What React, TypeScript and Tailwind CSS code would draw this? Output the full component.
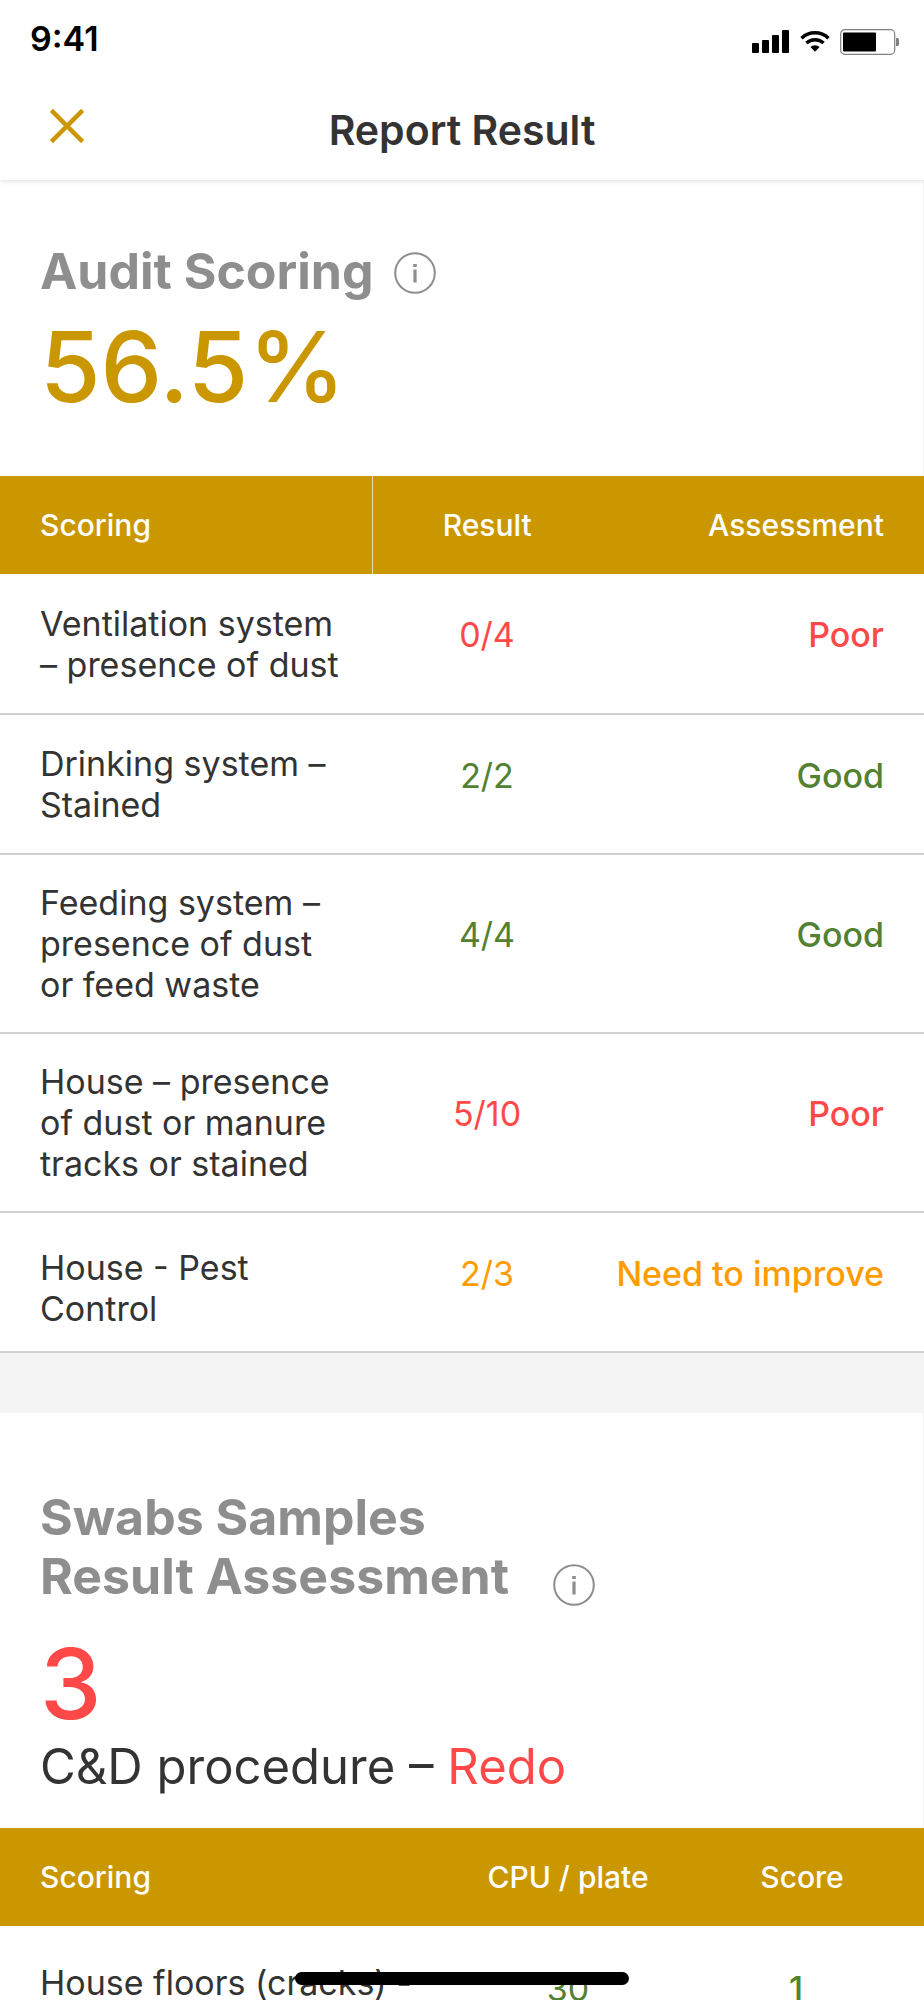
import clsx from "clsx";

type Level = "poor" | "good" | "improve";

interface AuditRow {
  label: string;
  result: string;
  level: Level;
}

const auditRows: AuditRow[] = [
  { label: "Ventilation system\n– presence of dust", result: "0/4", level: "poor" },
  { label: "Drinking system –\nStained", result: "2/2", level: "good" },
  {
    label: "Feeding system –\npresence of dust\nor feed waste",
    result: "4/4",
    level: "good",
  },
  {
    label: "House – presence\nof dust or manure\ntracks or stained",
    result: "5/10",
    level: "poor",
  },
  { label: "House - Pest\nControl", result: "2/3", level: "improve" },
];

const swabRows = [{ label: "House floors (cracks) -", count: "30", score: "1" }];

const levelText: Record<Level, string> = {
  poor: "Poor",
  good: "Good",
  improve: "Need to improve",
};

const levelColor: Record<Level, string> = {
  poor: "text-[#ff4848]",
  good: "text-[#538132]",
  improve: "text-[#ff9c00]",
};

function StatusBar() {
  return (
    <div className="flex h-20 items-center justify-between pl-[30px] pr-6 text-black">
      <span className="pb-[2px] text-[34px] leading-[40px] font-semibold">9:41</span>
      <div className="flex items-center gap-[10px] pt-[3px]">
        <svg width="38" height="24" viewBox="0 0 38 24" fill="currentColor" aria-hidden="true">
          <rect x="0" y="13" width="7" height="10" rx="1" />
          <rect x="10" y="10" width="7" height="13" rx="1" />
          <rect x="20" y="5" width="7" height="18" rx="1" />
          <rect x="30" y="0" width="7" height="23" rx="1" />
        </svg>
        <svg width="30" height="22" viewBox="0 0 30 22" fill="none" aria-hidden="true">
          <path d="M1.5 7.2a19.5 19.5 0 0 1 27 0" stroke="currentColor" strokeWidth="3.4" />
          <path d="M6.4 12.1a12.6 12.6 0 0 1 17.2 0" stroke="currentColor" strokeWidth="3.4" />
          <path d="M10.4 16.1a6.8 6.8 0 0 1 9.2 0L15 20.8z" fill="currentColor" />
        </svg>
        <svg width="60" height="26" viewBox="0 0 60 26" fill="none" aria-hidden="true">
          <rect x="0.7" y="0.7" width="54" height="24.6" rx="4" stroke="#808080" strokeWidth="1.2" />
          <rect x="3" y="3.5" width="33" height="19" rx="1" fill="currentColor" />
          <path d="M56 9h1.5a1.5 1.5 0 0 1 1.5 1.5v5a1.5 1.5 0 0 1-1.5 1.5H56z" fill="#808080" />
        </svg>
      </div>
    </div>
  );
}

function InfoButton({ label }: { label: string }) {
  return (
    <button type="button" aria-label={label} className="shrink-0 pt-1 text-[#8e8e8e]">
      <svg width="42" height="42" viewBox="0 0 42 42" fill="none" aria-hidden="true">
        <circle cx="21" cy="21" r="19.8" stroke="currentColor" strokeWidth="2" />
        <rect x="19.2" y="12" width="3.6" height="3" fill="currentColor" />
        <rect x="19.4" y="17.5" width="3.2" height="13" fill="currentColor" />
      </svg>
    </button>
  );
}

function Header() {
  return (
    <header className="relative z-10 bg-white shadow-[0_1px_5px_rgba(0,0,0,0.14)]">
      <StatusBar />
      <div className="grid h-[100px] grid-cols-[1fr_auto_1fr] items-center px-[49px]">
        <button type="button" aria-label="Close" className="justify-self-start pb-2">
          <svg width="36" height="36" viewBox="0 0 36 36" fill="none" aria-hidden="true">
            <path d="M2.4 2.4l31.2 31.2M33.6 2.4L2.4 33.6" stroke="#cb9700" strokeWidth="4.4" />
          </svg>
        </button>
        <h1 className="text-[41px] leading-[48px] font-semibold text-[#333333]">
          Report Result
        </h1>
      </div>
    </header>
  );
}

function AuditTable() {
  return (
    <table className="w-full table-fixed text-[34px] leading-[41px]">
      <thead className="bg-[#cb9700] text-[30px] text-white">
        <tr className="h-[98px]">
          <th className="w-[372px] border-r border-[#ecd9a3] pl-10 text-left font-medium">
            Scoring
          </th>
          <th className="w-[230px] font-medium">Result</th>
          <th className="pr-10 text-right font-medium">Assessment</th>
        </tr>
      </thead>
      <tbody>
        {auditRows.map((row, index) => (
          <tr key={row.label} className="h-[140px] border-b-2 border-[#d1d1d1]">
            <td
              className={clsx(
                "pl-10 whitespace-pre-line text-[#333333]",
                index === auditRows.length - 1 ? "pt-8 pb-5" : "pt-[27px] pb-[27px]"
              )}
            >
              {row.label}
            </td>
            <td className={clsx("pb-[18px] text-center", levelColor[row.level])}>
              {row.result}
            </td>
            <td className={clsx("pr-10 pb-[18px] text-right font-medium", levelColor[row.level])}>
              {levelText[row.level]}
            </td>
          </tr>
        ))}
      </tbody>
    </table>
  );
}

function SwabTable() {
  return (
    <table className="w-full table-fixed text-[34px] leading-[41px]">
      <thead className="bg-[#cb9700] text-[30px] text-white">
        <tr className="h-[98px]">
          <th className="pl-10 text-left font-medium">Scoring</th>
          <th className="w-[224px] font-medium">CPU / plate</th>
          <th className="w-[244px] font-medium">Score</th>
        </tr>
      </thead>
      <tbody>
        {swabRows.map((row) => (
          <tr key={row.label} className="border-b-2 border-[#d1d1d1]">
            <td className="pt-9 pb-5 pl-10 text-[#333333]">{row.label}</td>
            <td className="pt-[42px] text-center align-top text-[#538132]">{row.count}</td>
            <td className="pt-[42px] pr-3 text-center align-top font-medium text-[#538132]">
              {row.score}
            </td>
          </tr>
        ))}
      </tbody>
    </table>
  );
}

export default function App() {
  return (
    <div className="flex h-screen flex-col overflow-hidden bg-white font-['Inter','Liberation_Sans',sans-serif]">
      <Header />

      <main className="min-h-0 flex-1 overflow-hidden">
        <section>
          <div className="border-r border-[#f4f4f4] px-10 pt-[62px] pb-[61px]">
            <div className="flex items-center gap-5">
              <h2 className="text-[50px] leading-[58px] font-bold text-[#8e8e8e]">
                Audit Scoring
              </h2>
              <InfoButton label="About audit scoring" />
            </div>
            <p className="pt-[19px] text-[98px] leading-[96px] font-medium text-[#cb9700]">
              56.5%
            </p>
          </div>
          <AuditTable />
        </section>

        <div className="h-[60px] bg-[#f4f4f4]" />

        <section>
          <div className="border-r border-[#f4f4f4] px-10 pt-[75px] pb-8">
            <div className="flex items-end gap-11">
              <h2 className="text-[50px] leading-[59px] font-bold text-[#8e8e8e]">
                Swabs Samples
                <br />
                Result Assessment
              </h2>
              <InfoButton label="About swabs samples result assessment" />
            </div>
            <p className="pt-[30px] text-[98px] leading-[96px] font-medium text-[#ff4848]">3</p>
            <p className="pt-[6px] text-[49px] leading-[58px] text-[#333333]">
              C&amp;D procedure – <span className="text-[#ff4848]">Redo</span>
            </p>
          </div>
          <SwabTable />
        </section>
      </main>

      {/* home indicator */}
      <div className="fixed bottom-[15px] left-1/2 h-[13px] w-[334px] -translate-x-1/2 rounded-full bg-black" />
    </div>
  );
}
